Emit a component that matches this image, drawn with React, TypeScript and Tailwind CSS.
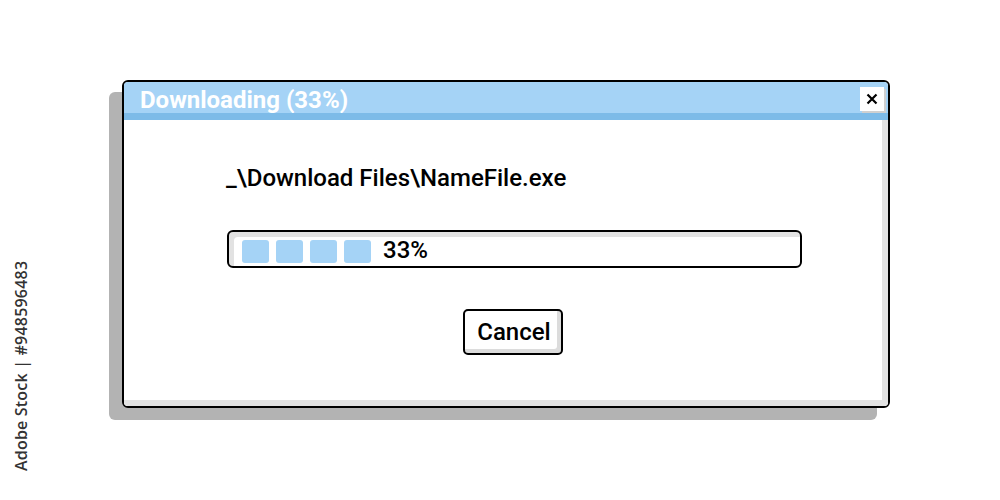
import React from 'react';

const BLOCKS = [0, 1, 2, 3];

export default function App() {
  return (
    <div
      className="relative w-[1000px] h-[500px] bg-white overflow-hidden pt-[80px] pl-[122px]"
      style={{ fontFamily: 'Roboto, "Liberation Sans", sans-serif' }}
    >
      {/* watermark */}
      <div className="absolute left-[9px] top-[471px] origin-top-left -rotate-90 text-[16px] font-semibold text-[#333] whitespace-nowrap tracking-[0.2px]" style={{ fontFamily: '"Open Sans", sans-serif' }}>
        Adobe Stock | #948596483
      </div>

      {/* window */}
      <div className="w-[768px] h-[328px] border-2 border-black rounded-[6px] bg-white shadow-[-13px_12px_0_0_#b3b3b3] flex flex-col overflow-hidden">
        {/* title bar */}
        <div className="h-[31px] bg-[#a5d3f6] flex items-center justify-between pl-[16px] pr-[4px]">
          <span className="text-white font-bold text-[24px] leading-none mt-[4px]">Downloading (33%)</span>
          <div className="w-[24px] h-[24px] mt-[3px] bg-white shadow-[2px_2px_0_0_#d0d0d0] flex items-center justify-center">
            <svg width="12" height="12" viewBox="0 0 12 12">
              <path d="M1.5 1.5 L10.5 10.5 M10.5 1.5 L1.5 10.5" stroke="#000" strokeWidth="2.2" />
            </svg>
          </div>
        </div>
        <div className="h-[7px] bg-[#7dbbe8]" />

        {/* content */}
        <div className="flex-1 bg-white shadow-[inset_-6px_-6px_0_0_#e2e2e2] flex flex-col pt-[44px]">
          <div className="ml-[102px] text-[24px] leading-[28px] font-medium text-black">
            _\Download Files\NameFile.exe
          </div>

          <div className="ml-[103px] mt-[38px] w-[575px] h-[38px] border-2 border-black rounded-[6px] bg-white shadow-[inset_5px_5px_0_0_#e2e2e2] flex items-center pl-[13px] pt-[4px]">
            <div className="flex gap-[7px]">
              {BLOCKS.map((b) => (
                <div key={b} className="w-[27px] h-[23px] rounded-[3px] bg-[#a5d3f6]" />
              ))}
            </div>
            <span className="ml-[12px] text-[24px] leading-none text-black font-medium -mt-[3px]">33%</span>
          </div>

          <div className="ml-[339px] mt-[41px] w-[100px] h-[46px] border-[2.5px] border-black rounded-[5px] bg-white shadow-[inset_-4px_-4px_0_0_#dcdcdc] flex items-center justify-center">
            <span className="text-[24px] font-medium text-black leading-none ml-[2px]">Cancel</span>
          </div>
        </div>
      </div>
    </div>
  );
}
